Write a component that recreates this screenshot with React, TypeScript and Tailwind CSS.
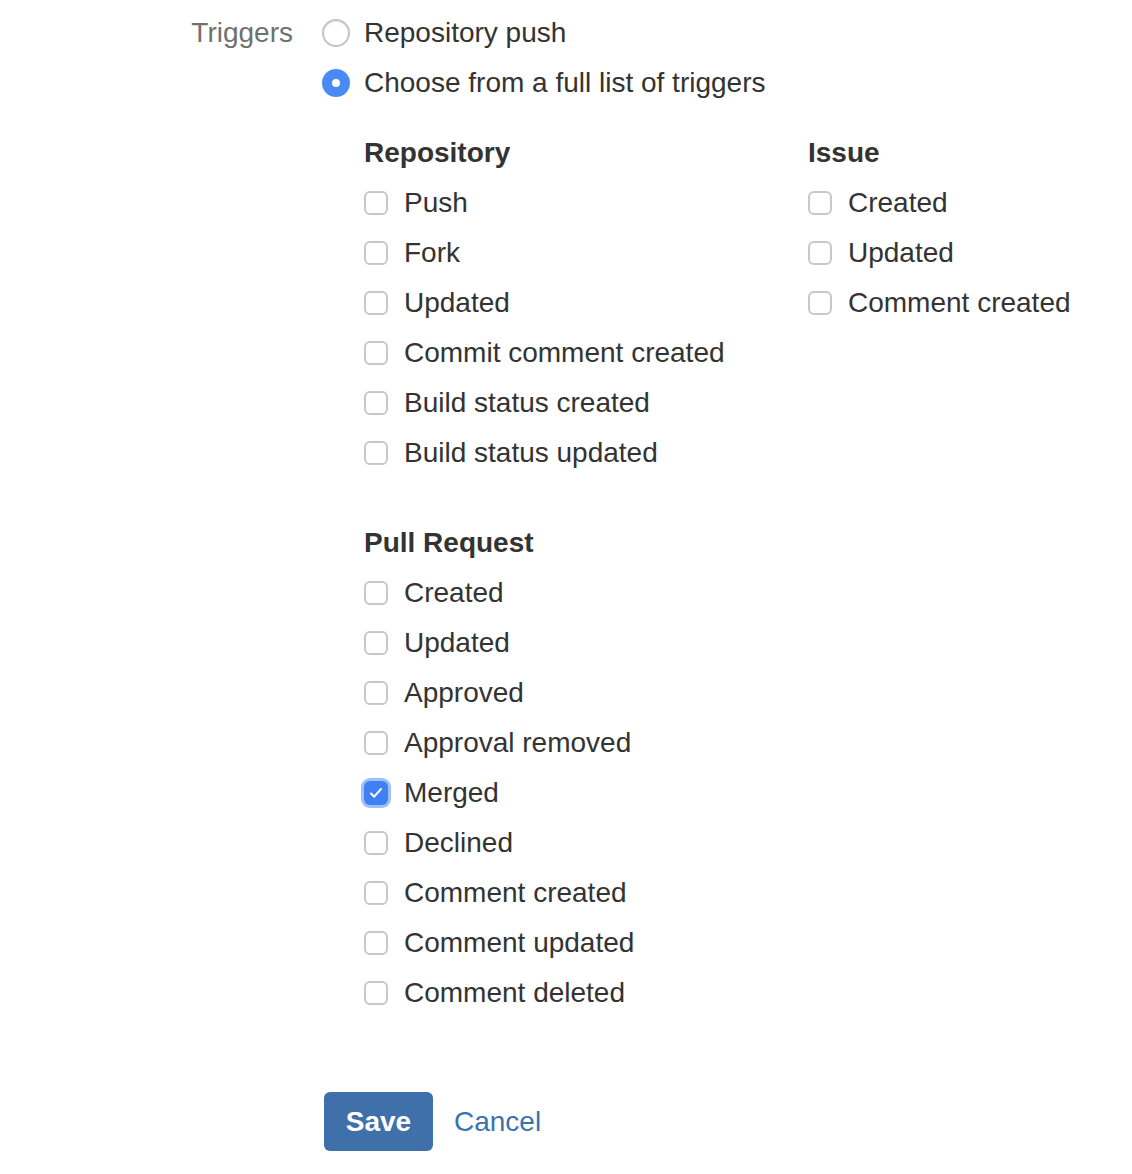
import React from 'react';

const repositoryTriggers = [
  { label: 'Push' },
  { label: 'Fork' },
  { label: 'Updated' },
  { label: 'Commit comment created' },
  { label: 'Build status created' },
  { label: 'Build status updated' },
];

const issueTriggers = [{ label: 'Created' }, { label: 'Updated' }, { label: 'Comment created' }];

const pullRequestTriggers = [
  { label: 'Created' },
  { label: 'Updated' },
  { label: 'Approved' },
  { label: 'Approval removed' },
  { label: 'Merged', checked: true },
  { label: 'Declined' },
  { label: 'Comment created' },
  { label: 'Comment updated' },
  { label: 'Comment deleted' },
];

function Radio({ checked, label }: { checked?: boolean; label: string }) {
  return (
    <label className="flex h-[50px] items-center gap-[14px]">
      {checked ? (
        <span className="flex h-[28px] w-[28px] items-center justify-center rounded-full bg-[#4a8af4]">
          <span className="h-[8px] w-[8px] rounded-full bg-white" />
        </span>
      ) : (
        <span className="h-[28px] w-[28px] rounded-full border-2 border-[#c4c4c4] bg-white shadow-[inset_0_1px_1px_rgba(0,0,0,0.08)]" />
      )}
      <span>{label}</span>
    </label>
  );
}

function Checkbox({ checked, label }: { checked?: boolean; label: string }) {
  return (
    <label className="flex h-[50px] items-center gap-[16px]">
      {checked ? (
        <span className="flex h-[24px] w-[24px] items-center justify-center rounded-[6px] bg-[#3f80f2] ring-[3px] ring-[#9dc0f7]">
          <svg width="18" height="18" viewBox="0 0 18 18" fill="none">
            <path d="M4 9.5l3.2 3.2L14 5" stroke="white" strokeWidth="2" strokeLinecap="round" strokeLinejoin="round" />
          </svg>
        </span>
      ) : (
        <span className="h-[24px] w-[24px] rounded-[6px] border-2 border-[#c8c8c8] bg-white" />
      )}
      <span>{label}</span>
    </label>
  );
}

function Group({ title, items }: { title: string; items: { label: string; checked?: boolean }[] }) {
  return (
    <div>
      <h3 className="flex h-[50px] items-center font-bold">{title}</h3>
      {items.map((item) => (
        <Checkbox key={item.label} label={item.label} checked={item.checked} />
      ))}
    </div>
  );
}

export default function App() {
  return (
    <div className="min-h-[1174px] bg-white pt-[8px] font-['Liberation_Sans',Arial,sans-serif] text-[28px] leading-none text-[#333333]">
      <div className="flex">
        <div className="flex h-[50px] w-[293px] shrink-0 items-center justify-end text-[#707070]">Triggers</div>
        <div className="ml-[29px]">
          <Radio label="Repository push" />
          <Radio label="Choose from a full list of triggers" checked />

          <div className="mt-[20px] pl-[42px]">
            <div className="flex">
              <div className="w-[444px]">
                <Group title="Repository" items={repositoryTriggers} />
              </div>
              <Group title="Issue" items={issueTriggers} />
            </div>
            <div className="mt-[40px]">
              <Group title="Pull Request" items={pullRequestTriggers} />
            </div>
          </div>

          <div className="mt-[74px] flex items-center gap-[21px] pl-[2px]">
            <button className="h-[59px] w-[109px] rounded-[6px] bg-[#4070aa] font-bold text-white">Save</button>
            <a className="text-[#3b73af]" href="#">
              Cancel
            </a>
          </div>
        </div>
      </div>
    </div>
  );
}
